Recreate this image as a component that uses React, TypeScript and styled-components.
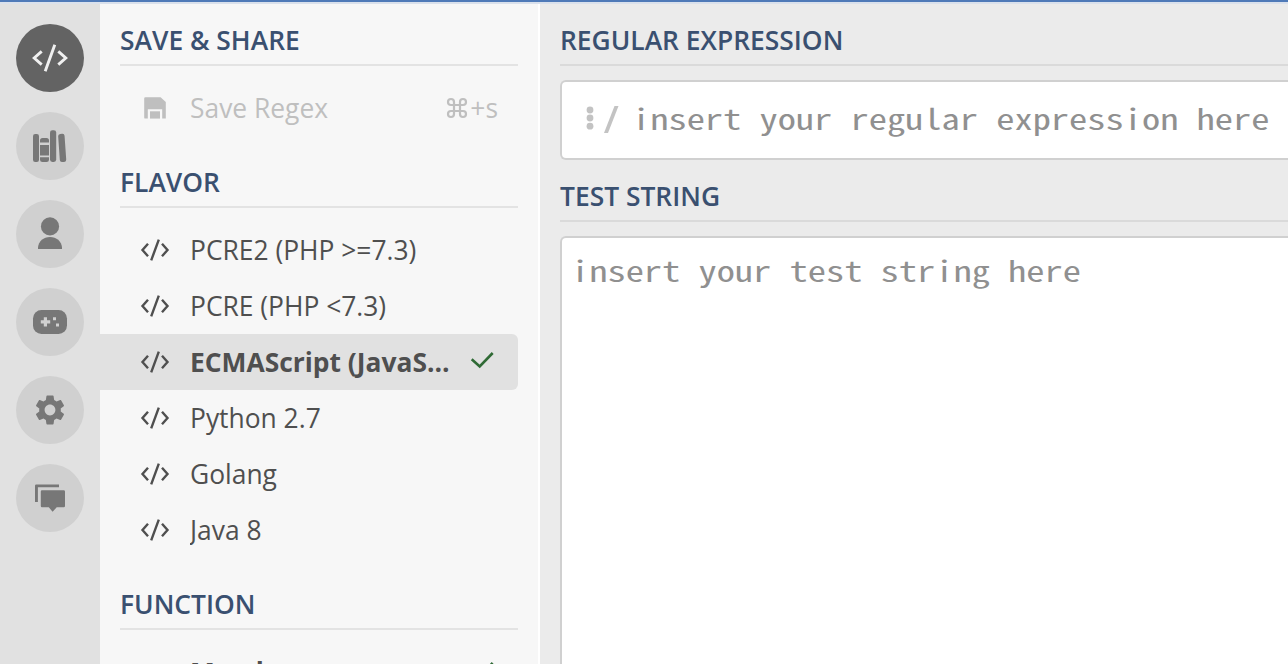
import React from "react";
import styled, { createGlobalStyle, css } from "styled-components";

const GlobalStyle = createGlobalStyle`
  *, *::before, *::after { box-sizing: border-box; }
  body {
    margin: 0;
    overflow: hidden;
    background: #ebebeb;
    font-family: "Open Sans", "Noto Sans", sans-serif;
  }
`;

const Page = styled.div`
  display: flex;
  flex-direction: column;
  width: 100%;
  height: 100vh;
  overflow: hidden;
  border-top: 2px solid #4f7ab8;
`;

const Workspace = styled.div`
  display: flex;
  flex: 1;
  min-height: 0;
  border-top: 2px solid #dae1ec;
`;

const Rail = styled.nav`
  display: flex;
  flex: none;
  flex-direction: column;
  align-items: center;
  gap: 20px;
  width: 100px;
  padding-top: 20px;
  background: #e1e1e1;
`;

const RailButton = styled.button<{ $active?: boolean }>`
  flex: none;
  width: 68px;
  height: 68px;
  padding: 0;
  border: 0;
  border-radius: 50%;
  color: ${(p) => (p.$active ? "#f0f0f0" : "#777777")};
  background: ${(p) => (p.$active ? "#636363" : "#d0d0d0")};

  svg { display: block; }
`;

const Sidebar = styled.aside`
  flex: none;
  width: 440px;
  overflow: hidden;
  padding-right: 20px;
  border-right: 2px solid #ffffff;
  background: #f7f7f7;
`;

const Heading = styled.h2<{ $line: string }>`
  flex: none;
  height: 62px;
  margin: 0;
  padding-top: 18px;
  border-bottom: 2px solid ${(p) => p.$line};
  color: #3a5070;
  font-size: 26.4px;
  font-weight: 600;
  line-height: 36px;
  white-space: nowrap;
`;

const Section = styled.section<{ $after: number }>`
  padding-bottom: ${(p) => p.$after}px;

  ${Heading} { margin-left: 20px; }
`;

const List = styled.div`
  padding-top: 14px;
`;

const rowState = {
  normal: css`color: #4f4f4f;`,
  disabled: css`color: #bfbfbf;`,
  selected: css`
    color: #4f4f4f;
    background: #e1e1e1;
    font-weight: 700;
  `,
};

const Row = styled.div<{ $state: keyof typeof rowState }>`
  display: flex;
  align-items: center;
  height: 56px;
  padding: 0 20px 0 40px;
  border-radius: 0 6px 6px 0;
  font-size: 26.4px;
  line-height: 36px;
  ${(p) => rowState[p.$state]}

  svg { flex: none; }
`;

const Label = styled.span`
  flex: 1;
  min-width: 0;
  margin: 0 8px 0 20px;
  overflow: hidden;
  text-overflow: ellipsis;
  white-space: nowrap;
`;

const Shortcut = styled.span`
  display: flex;
  align-items: center;
  gap: 2px;
`;

const Main = styled.main`
  display: flex;
  flex: 1;
  flex-direction: column;
  min-width: 0;
  padding-left: 20px;
`;

const RegexField = styled.div`
  display: flex;
  flex: none;
  align-items: center;
  height: 80px;
  margin-top: 14px;
  padding-left: 23px;
  border: 2px solid #d0d0d0;
  border-right: 0;
  border-radius: 6px 0 0 6px;
  background: #ffffff;

  svg { flex: none; }
`;

const Placeholder = styled.span<{ $indent: number }>`
  display: block;
  width: max-content;
  margin-left: ${(p) => p.$indent}px;
  padding-bottom: 4px;
  color: #909090;
  font-family: "Noto Sans Mono CJK SC", "Liberation Mono", monospace;
  font-size: 28.5px;
  line-height: 40px;
  white-space: pre;
  transform: scaleX(1.278);
  transform-origin: 0 50%;
`;

const TestField = styled.div`
  flex: 1;
  margin-top: 14px;
  padding-top: 12px;
  border: 2px solid #d0d0d0;
  border-width: 2px 0 0 2px;
  border-radius: 6px 0 0 0;
  background: #ffffff;
`;

const RailIcon = ({ children }: { children: React.ReactNode }) => (
  <svg width="68" height="68" viewBox="0 0 68 68" fill="currentColor">
    {children}
  </svg>
);

const CodeIcon = () => (
  <svg width="30" height="24" viewBox="0 0 30 24" fill="none" stroke="currentColor" strokeWidth="2.4">
    <path d="M8 5.8 2.5 12 8 18.2M22 5.8 27.5 12 22 18.2M18.8 1.6 11.2 22.4" />
  </svg>
);

const SaveIcon = () => (
  <svg width="30" height="24" viewBox="0 0 30 24" fill="currentColor">
    <path d="M5.4 1.2H20.6L25.8 6V22.6H22.2V13.2H7.8V22.6H5.4Q4.2 22.6 4.2 21.4V2.4Q4.2 1.2 5.4 1.2Z" />
    <path d="M10 15.3H20V22.6H10Z" />
  </svg>
);

const MatchIcon = () => (
  <svg width="30" height="24" viewBox="0 0 30 24" fill="none" stroke="currentColor" strokeWidth="2">
    <path d="M5.5 4.5V21M5.5 12H24M18 6 24 12 18 18" />
  </svg>
);

const CheckIcon = () => (
  <svg width="36" height="24" viewBox="0 0 36 24" fill="none" stroke="#2f6a35" strokeWidth="2.6">
    <path d="M9.7 9.3 17.7 16.4 30.7 3" />
  </svg>
);

const CommandIcon = () => (
  <svg width="22" height="22" viewBox="1 1 22 22" fill="none" stroke="currentColor" strokeWidth="2.2">
    <path d="M15 6v12a3 3 0 1 0 3-3H6a3 3 0 1 0 3 3V6a3 3 0 1 0-3 3h12a3 3 0 1 0-3-3" />
  </svg>
);

const DelimiterIcon = () => (
  <svg width="34" height="30" viewBox="0 0 34 30" fill="#c3c3c3">
    <circle cx="5" cy="5" r="3.4" />
    <circle cx="5" cy="13" r="3.4" />
    <circle cx="5" cy="21.2" r="3.4" />
    <path d="M29.5 1H33.5L23 28H19Z" />
  </svg>
);

const railItems = [
  {
    name: "Editor",
    art: (
      <path
        d="M25.7 27.3 18.2 34 25.7 40.7M42.3 27.3 49.8 34 42.3 40.7M38.8 20.8 29.2 47.2"
        fill="none"
        stroke="currentColor"
        strokeWidth="2.9"
      />
    ),
  },
  {
    name: "Library",
    art: (
      <>
        <rect x="17" y="22" width="6" height="28" rx="2.2" />
        <path d="M24 30.4V28.5Q24 26 26.5 26H30.5Q33 26 33 28.5V30.4ZM24 33H33V43.4H24ZM24 45.2H33V47.8Q33 50 30.5 50H26.5Q24 50 24 47.8Z" />
        <rect x="34" y="18.2" width="6.2" height="31.8" rx="2.4" />
        <rect x="43" y="21.8" width="6.4" height="28.2" rx="2.2" transform="rotate(-4 46 36)" />
      </>
    ),
  },
  {
    name: "Account",
    art: (
      <>
        <circle cx="34" cy="26.4" r="9.1" />
        <path d="M22 49V47.5C22.5 41 27.5 36.9 34 36.9S45.5 41 46 47.5V49Z" />
      </>
    ),
  },
  {
    name: "Quiz",
    art: (
      <>
        <rect x="17" y="22" width="34" height="24" rx="8.5" />
        <path
          fill="#d0d0d0"
          d="M27.8 29.2H31V32.2H34.2V35.4H31V38.5H27.8V35.4H24.8V32.2H27.8ZM37 29.2H40V32.2H37ZM40 35.4H43V38.5H40Z"
        />
      </>
    ),
  },
  {
    name: "Settings",
    art: (
      <g transform="translate(16 16) scale(1.5)">
        <path d="M19.14 12.94c.04-.3.06-.61.06-.94 0-.32-.02-.64-.07-.94l2.03-1.58c.18-.14.23-.41.12-.61l-1.92-3.32c-.12-.22-.37-.29-.59-.22l-2.39.96c-.5-.38-1.03-.7-1.62-.94l-.36-2.54c-.04-.24-.24-.41-.48-.41h-3.84c-.24 0-.43.17-.47.41l-.36 2.54c-.59.24-1.13.57-1.62.94l-2.39-.96c-.22-.08-.47 0-.59.22L2.74 8.87c-.12.21-.08.47.12.61l2.03 1.58c-.05.3-.09.63-.09.94s.02.64.07.94l-2.03 1.58c-.18.14-.23.41-.12.61l1.92 3.32c.12.22.37.29.59.22l2.39-.96c.5.38 1.03.7 1.62.94l.36 2.54c.05.24.24.41.48.41h3.84c.24 0 .44-.17.47-.41l.36-2.54c.59-.24 1.13-.56 1.62-.94l2.39.96c.22.08.47 0 .59-.22l1.92-3.32c.12-.22.07-.47-.12-.61l-2.01-1.58zM12 15.6c-1.98 0-3.6-1.62-3.6-3.6s1.62-3.6 3.6-3.6 3.6 1.62 3.6 3.6-1.62 3.6-3.6 3.6z" />
      </g>
    ),
  },
  {
    name: "Feedback",
    art: (
      <>
        <path d="M20.2 20.5H43V23.2H21.9V38H19V21.7Q19 20.5 20.2 20.5Z" />
        <path d="M26 26.2H47.7Q49 26.2 49 27.5V42Q49 43.3 47.7 43.3H40.7L36.6 47.8 32.8 43.3H26Q24.8 43.3 24.8 42V27.5Q24.8 26.2 26 26.2Z" />
      </>
    ),
  },
];

const flavors = ["PCRE2 (PHP >=7.3)", "PCRE (PHP <7.3)", "ECMAScript (JavaScript)", "Python 2.7", "Golang", "Java 8"];
const selectedFlavor = 2;

export default function App() {
  return (
    <>
      <GlobalStyle />
      <Page>
        <Workspace>
          <Rail>
            {railItems.map((item, i) => (
              <RailButton key={item.name} aria-label={item.name} $active={i === 0}>
                <RailIcon>{item.art}</RailIcon>
              </RailButton>
            ))}
          </Rail>
          <Sidebar>
            <Section $after={10}>
              <Heading $line="#e3e3e3">SAVE &amp; SHARE</Heading>
              <List>
                <Row $state="disabled">
                  <SaveIcon />
                  <Label>Save Regex</Label>
                  <Shortcut>
                    <CommandIcon />
                    <span>+s</span>
                  </Shortcut>
                </Row>
              </List>
            </Section>
            <Section $after={10}>
              <Heading $line="#e3e3e3">FLAVOR</Heading>
              <List>
                {flavors.map((flavor, i) => (
                  <Row key={flavor} $state={i === selectedFlavor ? "selected" : "normal"}>
                    <CodeIcon />
                    <Label>{flavor}</Label>
                    {i === selectedFlavor && <CheckIcon />}
                  </Row>
                ))}
              </List>
            </Section>
            <Section $after={0}>
              <Heading $line="#e3e3e3">FUNCTION</Heading>
              <List>
                <Row $state="normal">
                  <MatchIcon />
                  <Label><b>Match</b></Label>
                  <CheckIcon />
                </Row>
              </List>
            </Section>
          </Sidebar>
          <Main>
            <Heading $line="#dadada">REGULAR EXPRESSION</Heading>
            <RegexField>
              <DelimiterIcon />
              <Placeholder $indent={13}>insert your regular expression here</Placeholder>
            </RegexField>
            <Heading $line="#dadada">TEST STRING</Heading>
            <TestField>
              <Placeholder $indent={9}>insert your test string here</Placeholder>
            </TestField>
          </Main>
        </Workspace>
      </Page>
    </>
  );
}
